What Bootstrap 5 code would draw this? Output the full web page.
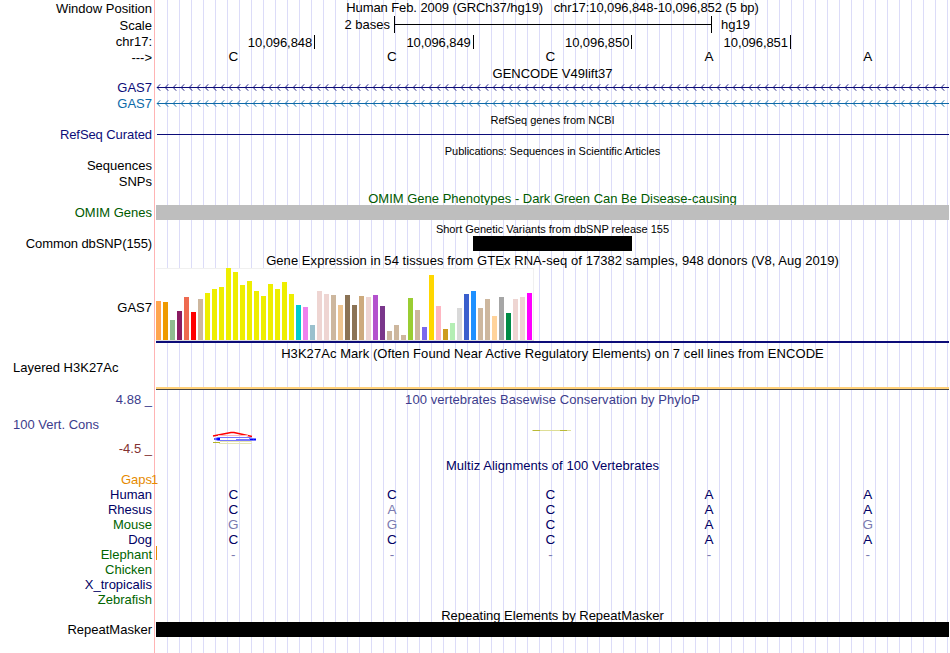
<!DOCTYPE html>
<html lang="en">
  <head>
    <meta charset="UTF-8" />
    <meta name="viewport" content="width=device-width, initial-scale=1.0" />
    <title>chr17:10,096,848-10,096,852</title>
    <link
      href="https://cdn.jsdelivr.net/npm/bootstrap@5.3.0/dist/css/bootstrap.min.css"
      rel="stylesheet"
    />
    <style>
      body {
        font-family: "Liberation Sans", Arial, sans-serif;
        font-size: 13px;
        line-height: 15px;
        color: #000;
        background: #fff;
      }
      .browser {
        width: 949px;
        height: 653px;
        /* pink divider, then a guide line every 12px */
        background:
          linear-gradient(#ffb4b4, #ffb4b4) 154px 0 / 1px 100% no-repeat,
          repeating-linear-gradient(90deg, transparent 0 11px, #dcdcf8 11px 12px) 156px 0 / 793px 100% no-repeat;
      }
      .side { width: 156px; padding-right: 4px; }
      .side-left { padding-left: 13px; }
      .view { width: 793px; }
      .h14 { height: 14px; }
      .h15 { height: 15px; }
      .h16 { height: 16px; }
      .h17 { height: 17px; }
      .fine { font-size: 11px; line-height: 17px; }
      .low { line-height: 17px; }
      .tight { letter-spacing: -0.09px; white-space: pre; }
      .wide { letter-spacing: 0.06px; }
      .navy { color: #0c0c78; }
      .blue { color: #0c69a8; }
      .green { color: #005a00; }
      .slate { color: #3c3c8c; }
      .maroon { color: #823232; }
      .deep { color: #000064; }
      .leaf { color: #006400; }
      .orange { color: #e68a00; }
      .pale { color: #7a7ab0; }
      .bases { margin-left: -2px; font-size: 13.5px; }
      .bases > span { width: 158.6px; text-align: center; }
      .coords { padding-left: 0.5px; }
      .coords > span { width: 158.6px; }
      .coords > span > span { border-right: 1px solid #000; padding-right: 2px; height: 14px; line-height: 15px; letter-spacing: -0.08px; }
      .scalebar { width: 318px; height: 17px; margin-top: -1px; border: solid #000; border-width: 0 1px; }
      .scalebar > div { height: 1px; background: #000; }
      .gtex { width: 378px; height: 73px; background: #fff; box-shadow: inset -1px 1px #f0f0f0; border-bottom: 1px solid #dcdcdc; }
      .gtex > div { width: 5px; margin-right: 2px; }
      svg { display: block; }
    </style>
  </head>
  <body>
    <div class="browser overflow-hidden">
      <div class="d-flex h17">
        <div class="side text-end low">Window Position</div>
        <div class="view text-center tight">Human Feb. 2009 (GRCh37/hg19)   chr17:10,096,848-10,096,852 (5 bp)</div>
      </div>
      <div class="d-flex h16">
        <div class="side text-end low">Scale</div>
        <div class="view d-flex">
          <div class="text-end pe-1" style="width: 238px">2 bases</div>
          <div class="scalebar d-flex flex-column justify-content-center"><div></div></div>
          <div style="padding-left: 9px">hg19</div>
        </div>
      </div>
      <div class="d-flex h17">
        <div class="side text-end low">chr17:</div>
        <div class="view d-flex coords">
          <span class="d-flex justify-content-end align-items-center"><span>10,096,848</span></span>
          <span class="d-flex justify-content-end align-items-center"><span>10,096,849</span></span>
          <span class="d-flex justify-content-end align-items-center"><span>10,096,850</span></span>
          <span class="d-flex justify-content-end align-items-center"><span>10,096,851</span></span>
        </div>
      </div>
      <div class="d-flex h16">
        <div class="side text-end">---&gt;</div>
        <div class="view d-flex bases" style="line-height: 13px" data-bases="CCCAA"></div>
      </div>

      <!-- GENCODE -->
      <div class="d-flex h14">
        <div class="side"></div>
        <div class="view text-center">GENCODE V49lift37</div>
      </div>
      <div class="d-flex h16 navy">
        <div class="side text-end">GAS7</div>
        <div class="view" data-intron></div>
      </div>
      <div class="d-flex h16 blue">
        <div class="side text-end">GAS7</div>
        <div class="view" data-intron></div>
      </div>

      <!-- RefSeq -->
      <div class="d-flex h15 fine">
        <div class="side"></div>
        <div class="view text-center">RefSeq genes from NCBI</div>
      </div>
      <div class="d-flex h16 navy">
        <div class="side text-end" style="letter-spacing: -0.08px">RefSeq Curated</div>
        <div class="view"><svg width="793" height="15"><path d="M1 7.5H793" stroke="currentColor" /></svg></div>
      </div>

      <!-- Publications -->
      <div class="d-flex h15 fine">
        <div class="side"></div>
        <div class="view text-center" style="letter-spacing: -0.05px">Publications: Sequences in Scientific Articles</div>
      </div>
      <div class="d-flex h16"><div class="side text-end">Sequences</div></div>
      <div class="d-flex h16"><div class="side text-end">SNPs</div></div>

      <!-- OMIM -->
      <div class="d-flex h15 green">
        <div class="side"></div>
        <div class="view text-center low">OMIM Gene Phenotypes - Dark Green Can Be Disease-causing</div>
      </div>
      <div class="d-flex h16 green">
        <div class="side text-end">OMIM Genes</div>
        <div class="view h15" style="background: #bebebe"></div>
      </div>

      <!-- dbSNP -->
      <div class="d-flex h15 fine">
        <div class="side"></div>
        <div class="view text-center">Short Genetic Variants from dbSNP release 155</div>
      </div>
      <div class="d-flex h17">
        <div class="side text-end" style="letter-spacing: -0.1px">Common dbSNP(155)</div>
        <div class="view d-flex justify-content-center"><div class="h15 bg-black" style="width: 159px"></div></div>
      </div>

      <!-- GTEx -->
      <div class="d-flex h15">
        <div class="side"></div>
        <div class="view text-center wide">Gene Expression in 54 tissues from GTEx RNA-seq of 17382 samples, 948 donors (V8, Aug 2019)</div>
      </div>
      <div class="d-flex">
        <div class="side text-end align-self-center pt-1">GAS7</div>
        <div class="view">
          <div class="gtex d-flex align-items-end" id="gtex"></div>
          <div style="height: 2px; background: #0c0c78"></div>
        </div>
      </div>

      <!-- H3K27Ac -->
      <div class="d-flex" style="height: 47px">
        <div class="side side-left" style="padding-top: 17px">Layered H3K27Ac</div>
        <div class="view d-flex flex-column justify-content-between text-center">
          <div class="wide" style="padding-top: 3px">H3K27Ac Mark (Often Found Near Active Regulatory Elements) on 7 cell lines from ENCODE</div>
          <div style="height: 3px; background: #ffd078; border-bottom: 1px solid #464646"></div>
        </div>
      </div>

      <!-- PhyloP -->
      <div class="d-flex slate" style="height: 68px; padding: 2px 0 2px">
        <div class="side d-flex flex-column justify-content-between">
          <div class="text-end">4.88 _</div>
          <div class="side-left">100 Vert. Cons</div>
          <div class="text-end maroon">-4.5 _</div>
        </div>
        <div class="view text-center">
          <div class="wide">100 vertebrates Basewise Conservation by PhyloP</div>
          <svg width="793" height="49" fill="none">
            <path d="M57 29L75 25.500H78L96 29.500" stroke="#f00" stroke-width="1.5" />
            <path d="M62 28.500H92" stroke="#fbb" />
            <path d="M58 32H64M93 32.500H100" stroke="#00f" stroke-width="2" />
            <path d="M62 30.500H94L98 32M62 33.500H96M58 32L62 30.500M58 32L62 33.500M80 32.500H94" stroke="#77f" />
            <path d="M57 35.500H64" stroke="#b4b428" />
            <path d="M63 36.500H96M64 34.500H96" stroke="#e6e6b4" />
            <path d="M376 23.500H415" stroke="#dede96" />
            <path d="M377 23.500H384M404 23.500H411" stroke="#b9b937" />
          </svg>
        </div>
      </div>

      <!-- Multiz -->
      <div class="d-flex h14 deep">
        <div class="side"></div>
        <div class="view text-center wide">Multiz Alignments of 100 Vertebrates</div>
      </div>
      <div class="d-flex h15 orange">
        <div class="side text-end">Gaps</div>
        <div class="view" style="margin-left: -5px">1</div>
      </div>
      <div class="d-flex h15 deep"><div class="side text-end">Human</div><div class="view d-flex bases" data-bases="CCCAA"></div></div>
      <div class="d-flex h15 deep"><div class="side text-end">Rhesus</div><div class="view d-flex bases" data-bases="CaCAA"></div></div>
      <div class="d-flex h15 leaf"><div class="side text-end">Mouse</div><div class="view d-flex bases deep" data-bases="ggCAg"></div></div>
      <div class="d-flex h15 deep"><div class="side text-end">Dog</div><div class="view d-flex bases" data-bases="CCCAA"></div></div>
      <div class="d-flex h15 leaf">
        <div class="side text-end">Elephant</div>
        <div style="width: 1px; height: 14px; margin: -1px -1px 0 0; background: #e68a00"></div>
        <div class="view d-flex bases" data-bases="-----"></div>
      </div>
      <div class="d-flex h15 leaf"><div class="side text-end">Chicken</div></div>
      <div class="d-flex h15 deep"><div class="side text-end">X_tropicalis</div></div>
      <div class="d-flex h15 leaf"><div class="side text-end">Zebrafish</div></div>

      <!-- RepeatMasker -->
      <div class="d-flex h15">
        <div class="side"></div>
        <div class="view text-center low">Repeating Elements by RepeatMasker</div>
      </div>
      <div class="d-flex h15">
        <div class="side text-end">RepeatMasker</div>
        <div class="view bg-black"></div>
      </div>
    </div>

    <script src="https://cdn.jsdelivr.net/npm/bootstrap@5.3.0/dist/js/bootstrap.bundle.min.js"></script>
    <script>
      // [color, height] or [color, height, height, ...] for neighbouring tissues
      const tissues = [
        ["#ffa54f", 39], ["#ee9a00", 38], ["#8fbc8f", 20], ["#8b1c62", 29],
        ["#ee6a50", 43], ["#ff0000", 28], ["#cdb79e", 41],
        ["#eeee00", 47, 51, 53, 72, 68, 55, 59, 49, 44, 56, 51, 58, 46],
        ["#00cdcd", 35], ["#ee82ee", 33], ["#9ac0cd", 15], ["#eed5d2", 49, 46],
        ["#cdb79e", 45], ["#eec591", 35], ["#8b7355", 45, 35], ["#cdaa7d", 44],
        ["#eed5d2", 43], ["#b452cd", 45], ["#7a378b", 34], ["#cdb79e", 9, 15, 5],
        ["#9acd32", 42], ["#cdb79e", 30], ["#7b68ee", 13], ["#ffd700", 65],
        ["#ffb6c1", 34], ["#cd9b1d", 11], ["#b4eeb4", 17], ["#d9d9d9", 32],
        ["#3a5fcd", 46], ["#1e90ff", 49], ["#cdb79e", 32, 41], ["#ffd39b", 24],
        ["#a6a6a6", 43], ["#008b45", 27], ["#eed5d2", 41, 43], ["#ff00ff", 47],
      ];
      document.getElementById("gtex").innerHTML = tissues
        .map(([color, ...heights]) =>
          heights.map((h) => `<div style="height:${h}px;background:${color}"></div>`).join("")
        )
        .join("");

      // lower case marks a base that differs from human
      document.querySelectorAll("[data-bases]").forEach((el) => {
        el.innerHTML = [...el.dataset.bases]
          .map((b) => `<span class="${/[a-z-]/.test(b) ? "pale" : ""}">${b.toUpperCase()}</span>`)
          .join("");
      });

      // intron line with strand arrows every 8px
      document.querySelectorAll("[data-intron]").forEach((el) => {
        let d = "";
        for (let x = 1.2; x < 790; x += 8) d += `M${x + 3} 4.3L${x} 7.5L${x + 3} 10.7`;
        el.innerHTML = `<svg width="793" height="15" fill="none" stroke="currentColor"><path d="M1 7.5H793"/><path d="${d}" stroke-width="0.9"/></svg>`;
      });
    </script>
  </body>
</html>
